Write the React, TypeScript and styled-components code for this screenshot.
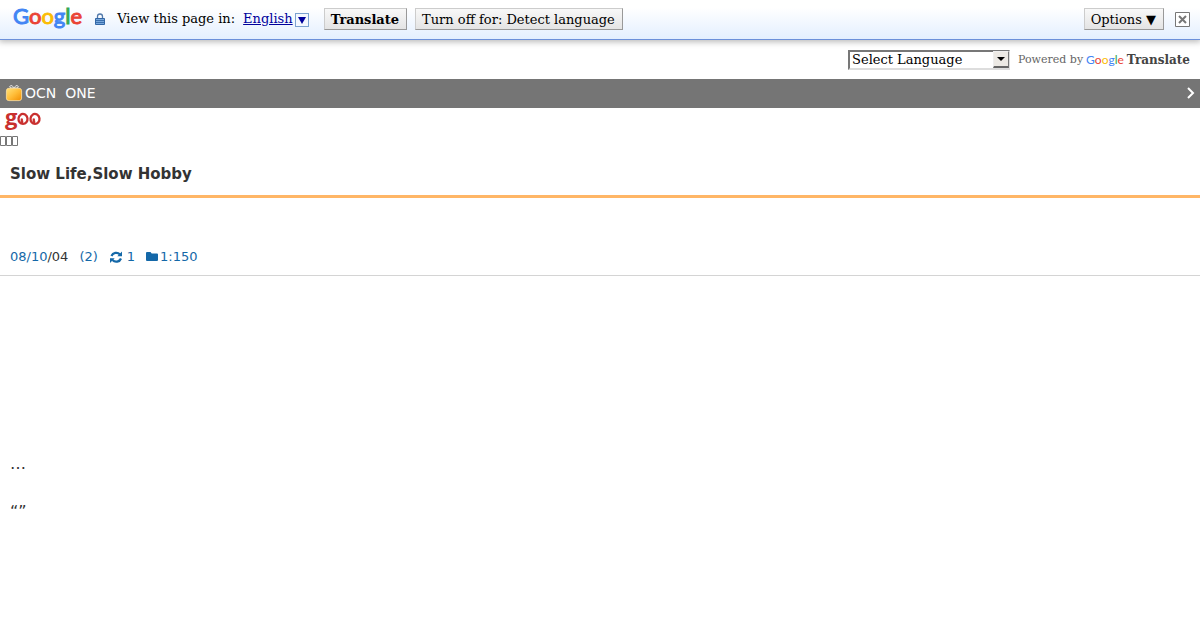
import React from "react";
import styled, { createGlobalStyle } from "styled-components";

const sans = `"DejaVu Sans", sans-serif`;
const serif = `"DejaVu Serif", serif`;

const GlobalStyle = createGlobalStyle`
  * { box-sizing: border-box; }
  body { margin: 0; background: #fff; color: #333; font: 13px/16px ${sans}; }
  a { color: #1468a8; text-decoration: none; }
`;

const TranslateBar = styled.header`
  display: flex;
  align-items: center;
  height: 40px;
  padding: 0 10px 1px 13px;
  background: linear-gradient(#fff 20%, #e3efff);
  border-bottom: 1px solid #6b90da;
  box-shadow: 0 1px 6px 1px #bbb;
  color: #000;
  font: 13px/18px ${serif};
`;

const Wordmark = styled.span<{ $size: number }>`
  font: ${(p) => p.$size}px/${(p) => p.$size}px Lato, sans-serif;
  -webkit-text-stroke: ${(p) => (p.$size > 12 ? "1px" : "0")};
`;

const Letter = styled.span<{ $color: string }>`
  color: ${(p) => p.$color};
`;

const BarMark = styled.a`
  display: flex;
  padding-bottom: 6px;
`;

const LockIcon = styled.svg`
  margin: 0 12px 0 13px;
`;

const LanguageLink = styled.a`
  display: flex;
  align-items: center;
  gap: 2px;
  margin: 0 15px 0 8px;
  color: #00009c;
`;

const Underlined = styled.span`
  text-decoration: underline;
`;

const ArrowBox = styled.span`
  display: flex;
  align-items: center;
  justify-content: center;
  width: 14px;
  height: 14px;
  margin-top: 2px;
  border: 1px solid #7ba2d0;
  background: #f4f8ff;
`;

const BarButton = styled.button<{ $bold?: boolean }>`
  height: 22px;
  padding: 2px 7px 0 6px;
  margin-right: 8px;
  border: 1px solid;
  border-color: #ccc #999 #999 #ccc;
  background: linear-gradient(#f8f8f8, #e4e4e4);
  color: #000;
  font: ${(p) => (p.$bold ? "bold" : "normal")} 13px/16px ${serif};
  white-space: nowrap;
`;

const BarEnd = styled.div`
  display: flex;
  align-items: center;
  margin-left: auto;
`;

const CloseButton = styled.button`
  display: flex;
  padding: 0;
  margin: 0 0 0 3px;
  border: 0;
  background: none;
`;

const LanguageRow = styled.div`
  display: flex;
  justify-content: flex-end;
  align-items: center;
  gap: 8px;
  height: 39px;
  padding-right: 10px;
  color: #666;
  font: 11px/17px ${serif};
`;

const SelectFrame = styled.div`
  position: relative;
  width: 162px;
  height: 20px;
`;

const LanguageSelect = styled.select`
  appearance: none;
  width: 100%;
  height: 100%;
  padding: 0 18px 0 2px;
  border: 2px solid;
  border-color: #777 #ddd #ddd #777;
  border-radius: 0;
  background: #fff;
  color: #000;
  font: 13px/16px ${serif};
`;

const SelectArrow = styled.span`
  position: absolute;
  top: 1px;
  right: 1px;
  display: flex;
  align-items: center;
  justify-content: center;
  width: 16px;
  height: 17px;
  border: 1px solid;
  border-color: #eee #777 #666 #eee;
  border-bottom-width: 2px;
  background: #ece9e4;
  pointer-events: none;
`;

const Attribution = styled.div`
  display: flex;
  align-items: center;
  gap: 3px;
`;

const TranslateName = styled.a`
  color: #444;
  font: bold 12px/16px ${serif};
`;

const PromoBar = styled.a`
  display: flex;
  align-items: center;
  justify-content: space-between;
  height: 29px;
  padding: 0 5px 1px;
  background: #757575;
  font-size: 14px;
  && { color: #fff; }
`;

const PromoText = styled.span`
  display: flex;
  align-items: center;
  gap: 2px;
  white-space: pre;
`;

const SiteLogo = styled.a`
  display: flex;
  padding: 0 2px;

  svg { overflow: visible; }
`;

const Placeholders = styled.svg`
  display: block;
  margin-top: 4px;
`;

const BlogTitle = styled.h1`
  margin: 0;
  padding: 17px 10px 10px;
  border-bottom: 3px solid #ffb666;
  font: bold 15px/22px ${sans};
`;

const EntryMeta = styled.div`
  display: flex;
  align-items: center;
  padding: 51px 10px 10px;
  border-bottom: 1px solid #d4d4d4;
`;

const MetaLink = styled.a<{ $gap?: number }>`
  display: flex;
  align-items: center;
  margin-left: 11px;
  gap: ${(p) => p.$gap ?? 0}px;
`;

const EntryBody = styled.article`
  padding: 176px 10px 32px;
  font: 16px/24px ${sans};
`;

const Paragraph = styled.p`
  margin: 0 0 24px;
`;

const googleLetters = [
  ["G", "#4285f4"],
  ["o", "#ea4335"],
  ["o", "#fbbc05"],
  ["g", "#4285f4"],
  ["l", "#34a853"],
  ["e", "#ea4335"],
];

function GoogleMark({ size }: { size: number }) {
  return (
    <Wordmark $size={size}>
      {googleLetters.map(([c, color], i) => <Letter key={i} $color={color}>{c}</Letter>)}
    </Wordmark>
  );
}

export default function App() {
  return (
    <>
      <GlobalStyle />
      <TranslateBar>
        <BarMark href="#"><GoogleMark size={22} /></BarMark>
        <LockIcon width="10" height="12" viewBox="0 0 10 12" aria-hidden="true">
          <path d="M2.500 6V3.500a2.500 2.500 0 0 1 5 0V6" fill="none" stroke="#5279aa" strokeWidth="1.300" />
          <path d="M.5 5.500h9v6h-9z" fill="#78a7dc" stroke="#3267a6" />
          <path d="M1 7.500h8M1 9.500h8" stroke="#3b70ad" />
        </LockIcon>
        <span>View this page in:</span>
        <LanguageLink href="#">
          <Underlined>English</Underlined>
          <ArrowBox><svg width="8" height="8" viewBox="0 0 8 8"><path d="M0 1h8L4 8z" fill="#00009c" /></svg></ArrowBox>
        </LanguageLink>
        <BarButton $bold>Translate</BarButton>
        <BarButton>Turn off for: Detect language</BarButton>
        <BarEnd>
          <BarButton>Options ▼</BarButton>
          <CloseButton aria-label="Close">
            <svg width="15" height="15" viewBox="0 0 15 15">
              <path d="M.5.5h14v14H.5z" fill="#fff" stroke="#777" />
              <path d="m4 4 7 7m0-7-7 7" stroke="#777" strokeWidth="2" />
            </svg>
          </CloseButton>
        </BarEnd>
      </TranslateBar>

      <LanguageRow>
        <SelectFrame>
          <LanguageSelect aria-label="Select Language"><option>Select Language</option></LanguageSelect>
          <SelectArrow><svg width="8" height="4" viewBox="0 0 8 4"><path d="M0 0h8L4 4z" fill="#000" /></svg></SelectArrow>
        </SelectFrame>
        <Attribution>
          <span>Powered by</span>
          <GoogleMark size={12} />
          <TranslateName href="#">Translate</TranslateName>
        </Attribution>
      </LanguageRow>

      <PromoBar href="#">
        <PromoText>
          <svg width="18" height="18" viewBox="0 0 18 18" aria-hidden="true">
            <defs>
              <linearGradient id="box" x1="0" y1="0" x2="1" y2="1">
                <stop stopColor="#ffe27a" />
                <stop offset=".5" stopColor="#ffbd38" />
                <stop offset="1" stopColor="#f08c00" />
              </linearGradient>
            </defs>
            <path d="M9 4Q7 0 5 2t4 2Q11 0 13 2T9 4" fill="none" stroke="#ddd" />
            <rect x="1.400" y="4.300" width="15.200" height="12.300" rx="2.500" fill="url(#box)" stroke="#ffe0a0" strokeWidth=".8" />
          </svg>
          {"OCN  ONE"}
        </PromoText>
        <svg width="9" height="12" viewBox="0 0 9 12" aria-hidden="true"><path d="m2 1 5 5-5 5" fill="none" stroke="#fff" strokeWidth="2" /></svg>
      </PromoBar>

      <SiteLogo href="#">
        <svg width="40" height="24" viewBox="0 0 40 24">
          <text x="3" y="17" fill="#c9302f" fontFamily="Open Sans, sans-serif" fontWeight="700" fontSize="22">g</text>
          <g fill="none" stroke="#c9302f" strokeWidth="2.300">
            <path d="M18.500 6.800a4.500 5 0 1 0 5 0q-3-1.800-5 0M20 10.500q-1 3 1.200 3.300" />
            <path d="M30.500 6.800a4.500 5 0 1 0 5 0q-3-1.800-5 0M32 10.500q-1 3 1.200 3.300" />
          </g>
        </svg>
      </SiteLogo>
      <Placeholders width="18" height="10" viewBox="0 0 18 10" aria-hidden="true">
        <path d="M.5.5h5v9h-5zM6.500.5h5v9h-5zM12.500.5h5v9h-5z" fill="none" stroke="#777" />
      </Placeholders>

      <BlogTitle>Slow Life,Slow Hobby</BlogTitle>
      <EntryMeta>
        <a href="#">08/10</a><span>/04</span>
        <MetaLink href="#">(2)</MetaLink>
        <MetaLink href="#" $gap={4}>
          <svg width="14" height="13" viewBox="0 0 14 13" aria-hidden="true">
            <path d="M2.500 5A5 4.800 0 0 1 11 3.500M12 7.500A5 4.800 0 0 1 3.500 9" fill="none" stroke="#1468a8" strokeWidth="2.200" />
            <path d="M13 .5v4.700H8.300zM1 12V7.300h4.700z" fill="#1468a8" />
          </svg>
          1
        </MetaLink>
        <MetaLink href="#" $gap={2}>
          <svg width="12" height="10" viewBox="0 0 12 10" aria-hidden="true"><path d="M1 0h3.500l1.200 1.500H11q1 0 1 1V8q0 1-1 1H1q-1 0-1-1V1q0-1 1-1z" fill="#1468a8" /></svg>
          1:150
        </MetaLink>
      </EntryMeta>
      <EntryBody>
        <Paragraph>…</Paragraph>
        <Paragraph>“”</Paragraph>
      </EntryBody>
    </>
  );
}
